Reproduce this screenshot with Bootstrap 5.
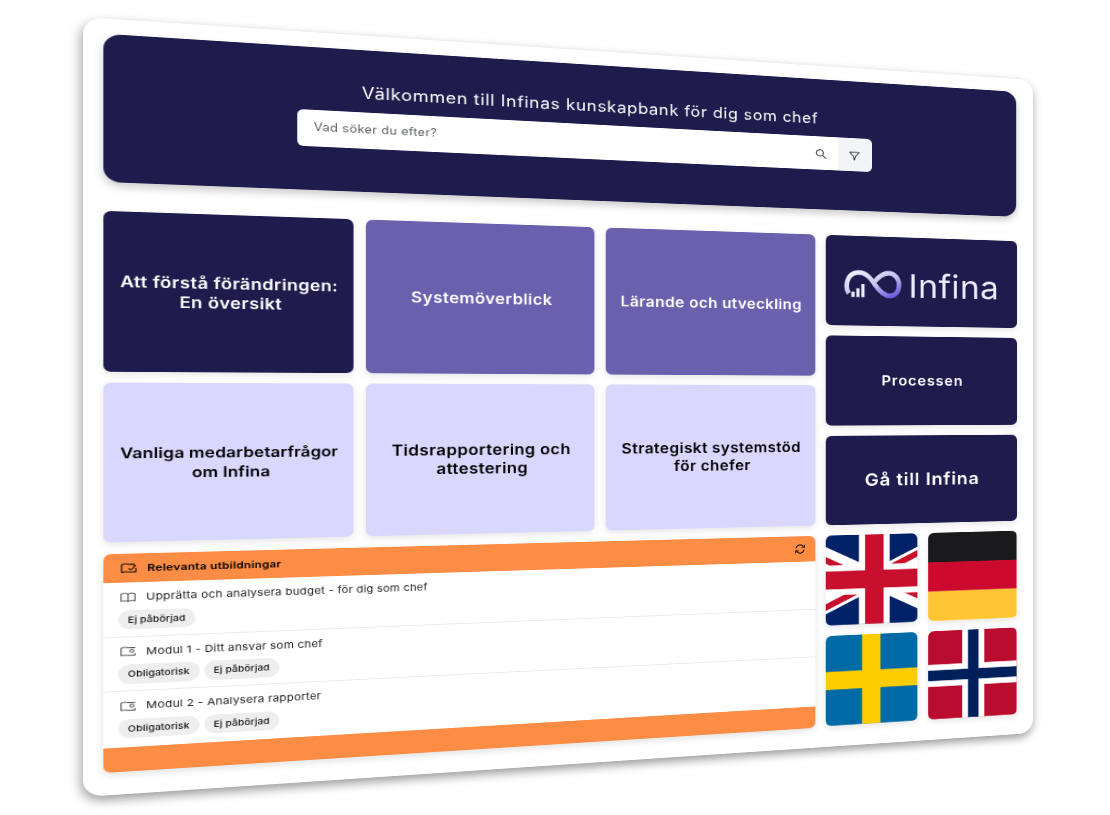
<!DOCTYPE html>
<html lang="sv">
<head>
    <meta charset="UTF-8">
    <meta name="viewport" content="width=device-width, initial-scale=1.0">
    <title>Infina kunskapsbank</title>
    <link href="https://cdn.jsdelivr.net/npm/bootstrap@5.3.2/dist/css/bootstrap.min.css" rel="stylesheet">
    <style>
        html, body {
            height: 100%;
            margin: 0;
            overflow: hidden;
            background: #fff;
        }
        body {
            font-family: "Inter", "Liberation Sans", sans-serif;
        }
        .stage {
            width: 100vw;
            height: 100vh;
            overflow: hidden;
        }
        /* the whole board is one flat 1000x860 page, tilted onto the reference quad */
        .board {
            width: 1000px;
            height: 860px;
            padding: 16.500px 21px 25px 18.300px;
            background: #fff;
            border-radius: 18px;
            box-shadow: -1px 5px 12px rgba(0, 0, 0, .4);
            transform-origin: 0 0;
            transform: matrix3d(1.15091, .07856, 0, .00019449, 0, .90698, 0, 0, 0, 0, 1, 0, 83, 17, 0, 1);
        }
        .hero {
            height: 164px;
            margin-bottom: 32.500px;
            padding: 38px 0 0 2px;
            background: #1f1b4d;
            border-radius: 16px;
            color: #fff;
            box-shadow: 0 5px 10px rgba(0, 0, 0, .2);
        }
        .hero-title {
            font-size: 18px;
            font-weight: 400;
            letter-spacing: .69px;
            line-height: 24px;
            margin-bottom: 10px;
        }
        .search-box {
            width: 608px;
            height: 42px;
        }
        .search-box .form-control {
            font-size: 12.500px;
            letter-spacing: .3px;
            border: 0;
            padding-left: 16px;
            border-radius: 6px 0 0 6px;
            color: #555;
        }
        .search-btn {
            width: 40px;
            padding: 0;
            border: 0;
            border-radius: 0;
            background: #fff;
        }
        .filter-btn {
            background: #f3f4f7;
            border-radius: 0 6px 6px 0;
        }
        .board-main {
            display: grid;
            grid-template-columns: 719.500px 229.500px;
            justify-content: space-between;
        }
        .tile-grid {
            display: grid;
            grid-template-columns: repeat(3, 231.500px);
            grid-template-rows: 178px 177px;
            gap: 12px 12.500px;
        }
        .tile {
            border-radius: 7px;
            font-size: 17px;
            font-weight: 600;
            letter-spacing: .4px;
            line-height: 22px;
            text-align: center;
            padding: 0 8px;
            box-shadow: 0 3px 8px rgba(0, 0, 0, .1);
        }
        .tile-dark { background: #1f1b4d; color: #fff; }
        .tile-mid { background: #6a60ae; color: #fff; }
        .tile-light { background: #d9d7fd; color: #000; }
        .tile-tight { font-size: 16px; letter-spacing: .1px; }
        .tile-process { font-size: 17.500px; letter-spacing: 1px; }
        .tile-go { font-size: 22px; letter-spacing: .9px; }
        .side-col {
            display: grid;
            grid-template-columns: 108.500px 108.500px;
            grid-auto-rows: 113.800px;
            gap: 13px;
            justify-content: space-between;
        }
        .side-col .tile { grid-column: 1 / 3; }
        .logo-word {
            font-size: 41px;
            font-weight: 400;
            line-height: 1;
            color: #ecebfb;
            letter-spacing: .5px;
            margin-top: 4px;
        }
        .tile-logo { padding-top: 8px; }
        .flag-box {
            border-radius: 7px;
            overflow: hidden;
            box-shadow: 0 3px 8px rgba(0, 0, 0, .1);
        }
        .flag-box svg {
            display: block;
            width: 100%;
            height: 100%;
        }
        .course-card {
            margin-top: 13px;
            height: 242px;
            border: 0;
            border-radius: 7px;
            overflow: hidden;
            box-shadow: 0 3px 8px rgba(0, 0, 0, .12);
        }
        .course-head {
            height: 32px;
            padding: 0 11px 0 15px;
            background: #fd8c44;
            border: 0;
            font-size: 11px;
            font-weight: 600;
            letter-spacing: .2px;
            color: #000;
        }
        .course-foot {
            height: 27px;
            background: #fd8c44;
            border: 0;
        }
        .course-item {
            height: 60.500px;
            padding: 8px 14px 0 12.500px;
            font-size: 11px;
            letter-spacing: .19px;
            color: #222;
            border-color: #e8e8e8;
        }
        .course-line { padding-left: 2.500px; }
        .course-line svg { flex: none; margin-right: 1px; }
        .course-chips { margin-top: 6px; }
        .course-chip {
            background: #eee;
            color: #111;
            font-size: 9.500px;
            font-weight: 500;
            letter-spacing: .1px;
            padding: 6px 9px;
        }
    </style>
</head>
<body>
<div class="stage">
    <div class="board">
        <div class="hero text-center d-flex flex-column align-items-center">
            <div class="hero-title">Välkommen till Infinas kunskapbank för dig som chef</div>
            <div class="input-group search-box">
                <input type="text" class="form-control" placeholder="Vad söker du efter?">
                <button class="btn search-btn" type="button" aria-label="Sök">
                    <svg width="13" height="14" viewBox="0 0 16 16" fill="none" stroke="#222" stroke-width="1.300"><circle cx="6.500" cy="6.500" r="5"/><path d="M10.200 10.200 15 15"/></svg>
                </button>
                <button class="btn search-btn filter-btn" type="button" aria-label="Filter">
                    <svg width="13" height="13" viewBox="0 0 16 16" fill="none" stroke="#222" stroke-width="1.200" stroke-linejoin="round"><path d="M1 2.500h14L9.500 8.500 7.800 14.500 6.500 8.500z"/></svg>
                </button>
            </div>
        </div>

        <div class="board-main">
            <div>
                <div class="tile-grid">
                    <div class="tile tile-dark d-flex align-items-center justify-content-center">Att förstå förändringen: En översikt</div>
                    <div class="tile tile-mid d-flex align-items-center justify-content-center">Systemöverblick</div>
                    <div class="tile tile-mid d-flex align-items-center justify-content-center">Lärande och utveckling</div>
                    <div class="tile tile-light tile-tight d-flex align-items-center justify-content-center">Vanliga medarbetarfrågor om Infina</div>
                    <div class="tile tile-light d-flex align-items-center justify-content-center">Tidsrapportering och attestering</div>
                    <div class="tile tile-light d-flex align-items-center justify-content-center">Strategiskt systemstöd för chefer</div>
                </div>

                <div class="card course-card">
                    <div class="card-header course-head d-flex align-items-center">
                        <svg width="16" height="12" viewBox="0 0 20 16" fill="none" stroke="#000" stroke-width="1.400" stroke-linejoin="round"><path d="M1 2.500c3-1 6-1 8.500 0H16v2M1 2.500V14c3-.8 6-.8 9 0h8V8"/><path d="M9.500 8.500l2.500 2.500 6-7"/></svg>
                        <span class="ms-1 ps-1">Relevanta utbildningar</span>
                        <svg class="ms-auto" width="13" height="14" viewBox="0 0 16 16" fill="none" stroke="#000" stroke-width="1.200"><path d="M2.500 7A5.500 5.500 0 0 1 12.500 4L14 5.500M13.500 9A5.500 5.500 0 0 1 3.500 12L2 10.500"/><path d="M14 1.500v4h-4M2 14.500v-4h4"/></svg>
                    </div>
                    <ul class="list-group list-group-flush flex-grow-1">
                        <li class="list-group-item course-item">
                            <div class="course-line d-flex align-items-center gap-2">
                                <svg width="14" height="11" viewBox="0 0 18 14" fill="none" stroke="#333" stroke-width="1.200"><path d="M1 2c3-1 5.500-1 8 .5C11.500 1 14 1 17 2v10.500c-3-1-5.500-1-8 .5-2.500-1.500-5-1.500-8-.5zM9 2.500V13"/></svg>
                                <span>Upprätta och analysera budget - för dig som chef</span>
                            </div>
                            <div class="course-chips d-flex gap-1">
                                <span class="badge rounded-pill course-chip">Ej påbörjad</span>
                            </div>
                        </li>
                        <li class="list-group-item course-item">
                            <div class="course-line d-flex align-items-center gap-2">
                                <svg width="14" height="11" viewBox="0 0 18 14" fill="none" stroke="#333" stroke-width="1.200"><path d="M17 2.500V2H9C6.500 1 3.500 1 1 2v11c2.500-.8 5-.8 8 0h8V10"/><circle cx="13.500" cy="6.500" r="2.300"/></svg>
                                <span>Modul 1 - Ditt ansvar som chef</span>
                            </div>
                            <div class="course-chips d-flex gap-1">
                                <span class="badge rounded-pill course-chip">Obligatorisk</span>
                                <span class="badge rounded-pill course-chip">Ej påbörjad</span>
                            </div>
                        </li>
                        <li class="list-group-item course-item">
                            <div class="course-line d-flex align-items-center gap-2">
                                <svg width="14" height="11" viewBox="0 0 18 14" fill="none" stroke="#333" stroke-width="1.200"><path d="M17 2.500V2H9C6.500 1 3.500 1 1 2v11c2.500-.8 5-.8 8 0h8V10"/><circle cx="13.500" cy="6.500" r="2.300"/></svg>
                                <span>Modul 2 - Analysera rapporter</span>
                            </div>
                            <div class="course-chips d-flex gap-1">
                                <span class="badge rounded-pill course-chip">Obligatorisk</span>
                                <span class="badge rounded-pill course-chip">Ej påbörjad</span>
                            </div>
                        </li>
                    </ul>
                    <div class="card-footer course-foot"></div>
                </div>
            </div>

            <div class="side-col">
                <div class="tile tile-dark tile-logo d-flex align-items-center justify-content-center gap-2">
                    <svg width="68" height="40" viewBox="0 0 70 36" preserveAspectRatio="none" fill="none">
                        <defs>
                            <linearGradient id="loopFade" x1="0" y1="0" x2="1" y2="1">
                                <stop offset="0" stop-color="#f4f3fe"/>
                                <stop offset=".55" stop-color="#c5bff0"/>
                                <stop offset="1" stop-color="#6252dc"/>
                            </linearGradient>
                        </defs>
                        <path d="M6 29C1 22 3 6 17 5c10-1 16 7 21 14 6 8 12 12 18 12 7 0 11-6 11-13S62 5 54 5c-7 0-12 5-17 10" stroke="url(#loopFade)" stroke-width="5.500"/>
                        <path d="M9 27h4v6H9zM15 23h4v10h-4zM21 18h4v15h-4z" fill="#ecebfb"/>
                    </svg>
                    <span class="logo-word">Infina</span>
                </div>
                <div class="tile tile-dark tile-process d-flex align-items-center justify-content-center">Processen</div>
                <div class="tile tile-dark tile-go d-flex align-items-center justify-content-center">Gå till Infina</div>

                <div class="flag-box">
                    <svg viewBox="14.300 0 30 30" preserveAspectRatio="none" role="img" aria-label="English">
                        <clipPath id="ukCut"><path d="M30 15h30v15zv15H0zH0V0zV0h30z"/></clipPath>
                        <rect width="60" height="30" fill="#012169"/>
                        <path d="M0 0l60 30M60 0L0 30" stroke="#fff" stroke-width="6"/>
                        <path d="M0 0l60 30M60 0L0 30" stroke="#c8102e" stroke-width="4" clip-path="url(#ukCut)"/>
                        <path d="M30 0v30M0 15h60" stroke="#fff" stroke-width="10"/>
                        <path d="M30 0v30M0 15h60" stroke="#c8102e" stroke-width="6"/>
                    </svg>
                </div>
                <div class="flag-box">
                    <svg viewBox="0 0 3 3" preserveAspectRatio="none" role="img" aria-label="Deutsch">
                        <rect width="3" height="1" fill="#1a1a1c"/>
                        <rect y="1" width="3" height="1" fill="#cc0a2d"/>
                        <rect y="2" width="3" height="1" fill="#ffc533"/>
                    </svg>
                </div>
                <div class="flag-box">
                    <svg viewBox="0 0 100 100" preserveAspectRatio="none" role="img" aria-label="Svenska">
                        <rect width="100" height="100" fill="#006aa7"/>
                        <path d="M39 0h20v100H39zM0 40h100v20H0z" fill="#fecc00"/>
                    </svg>
                </div>
                <div class="flag-box">
                    <svg viewBox="0 0 100 100" preserveAspectRatio="none" role="img" aria-label="Norsk">
                        <rect width="100" height="100" fill="#ba0c2f"/>
                        <path d="M38 0h25v100H38zM0 38h100v25H0z" fill="#fff"/>
                        <path d="M44.500 0h12v100h-12zM0 44.500h100v12H0z" fill="#00205b"/>
                    </svg>
                </div>
            </div>
        </div>
    </div>
</div>

    <script src="https://cdn.jsdelivr.net/npm/bootstrap@5.3.2/dist/js/bootstrap.bundle.min.js"></script>
</body>
</html>
